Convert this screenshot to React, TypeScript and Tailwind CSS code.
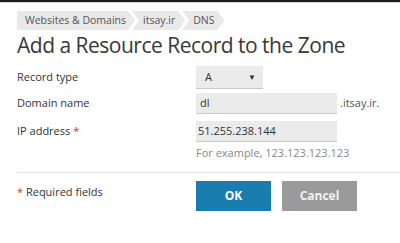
import React from "react";

const crumbs = [
  { label: "Websites & Domains", first: true },
  { label: "itsay.ir", first: false },
  { label: "DNS", first: false },
];

function Crumb({ label, first }: { label: string; first: boolean }) {
  return (
    <div
      className={`h-[19px] flex items-center bg-[#e9e9e9] text-[#555] text-[10.5px] leading-none ${first ? "pl-[8px] pr-[9px]" : "pl-[11px] pr-[10px] -ml-[3px]"}`}
      style={{
        clipPath: first
          ? "polygon(0 0, calc(100% - 7px) 0, 100% 50%, calc(100% - 7px) 100%, 0 100%)"
          : "polygon(0 0, calc(100% - 7px) 0, 100% 50%, calc(100% - 7px) 100%, 0 100%, 7px 50%)",
      }}
    >
      {label}
    </div>
  );
}

export default function App() {
  return (
    <div className="w-[400px] h-[243px] bg-white overflow-hidden" style={{ fontFamily: "'Open Sans', sans-serif" }}>
      <div className="h-[2px] bg-[#1c1c1c]" />
      <div className="h-px bg-[#d8d8d8]" />
      <div className="px-[17px]">
        <div className="flex mt-[8px]">
          {crumbs.map((c) => (
            <Crumb key={c.label} {...c} />
          ))}
        </div>
        <h1 className="mt-[1px] text-[21px] leading-[28px] tracking-[-0.5px] text-[#383838] font-normal">
          Add a Resource Record to the Zone
        </h1>
        <div className="mt-[7px] grid grid-cols-[179px_1fr] items-center gap-y-[4px] text-[11px] text-[#333]">
          <div>Record type</div>
          <div>
            <div className="w-[67px] h-[23px] bg-[#ebebeb] border-b border-[#c8c8c8] flex items-center justify-between pl-[9px] pr-[7px] text-[11px]">
              <span>A</span>
              <span className="text-[8px]">▼</span>
            </div>
          </div>
          <div>Domain name</div>
          <div className="flex items-center">
            <div className="w-[141px] h-[21px] bg-[#ebebeb] border-b border-[#c8c8c8] flex items-center px-[4px]">dl</div>
            <span className="ml-[3px] text-[#555]">.itsay.ir.</span>
          </div>
          <div className="mt-[3px]">
            IP address <span className="text-[#c0392b]">*</span>
          </div>
          <div className="mt-[3px]">
            <div className="w-[141px] h-[21px] bg-[#ebebeb] border-b border-[#c8c8c8] flex items-center px-[2px]">51.255.238.144</div>
          </div>
          <div />
          <div className="-mt-[1px] text-[#888] text-[11px]">For example, 123.123.123.123</div>
        </div>
        <div className="mt-[10px] h-px bg-[#e3e3e3] -mr-[17px]" />
        <div className="grid grid-cols-[179px_1fr] mt-[8px]">
          <div className="text-[11px] text-[#333] pt-[3px]">
            <span className="text-[#c0392b]">*</span> Required fields
          </div>
          <div className="flex gap-[11px]">
            <button className="w-[75px] h-[30px] bg-[#1a7db0] text-white text-[12px] font-bold">OK</button>
            <button className="w-[75px] h-[30px] bg-[#9a9a9a] text-[#f2f2f2] text-[12px] font-bold">Cancel</button>
          </div>
        </div>
      </div>
    </div>
  );
}
